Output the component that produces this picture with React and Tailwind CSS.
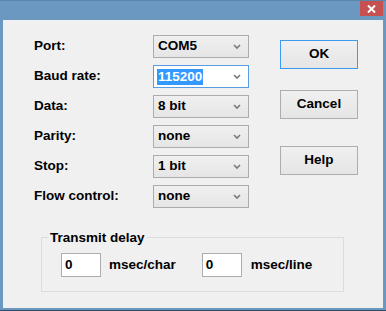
import React from "react";

const font = { fontFamily: '"Liberation Sans", Arial, sans-serif' };

function Chevron() {
  return (
    <svg width="8" height="6" viewBox="0 0 8 6" className="text-[#7a7a7a]">
      <polyline points="1,1 4,4 7,1" fill="none" stroke="currentColor" strokeWidth="1.6" />
    </svg>
  );
}

function Combo({ value, focused }) {
  if (focused) {
    return (
      <div className="flex items-center justify-between w-[96px] h-[23px] border border-[#569de5] bg-white pl-[3px] pr-[7px]">
        <span className="bg-[#3399ff] text-white px-[1px] leading-[16px]">{value}</span>
        <Chevron />
      </div>
    );
  }
  return (
    <div className="flex items-center justify-between w-[96px] h-[23px] border border-[#acacac] bg-gradient-to-b from-[#f0f0f0] to-[#e5e5e5] pl-[4px] pr-[7px]">
      <span>{value}</span>
      <Chevron />
    </div>
  );
}

function Button({ label, focused }) {
  return (
    <button
      className={
        "w-[78px] h-[29px] border bg-gradient-to-b from-[#f0f0f0] to-[#e5e5e5] text-black font-bold " +
        (focused ? "border-[#3c9bf0]" : "border-[#adadad]")
      }
    >
      {label}
    </button>
  );
}

const rows = [
  { label: "Port:", value: "COM5" },
  { label: "Baud rate:", value: "115200", focused: true },
  { label: "Data:", value: "8 bit" },
  { label: "Parity:", value: "none" },
  { label: "Stop:", value: "1 bit" },
  { label: "Flow control:", value: "none" },
];

export default function App() {
  return (
    <div
      className="w-[386px] h-[311px] flex flex-col bg-[#6a98c0] border-t border-[#5a85ab] border-b border-b-[#2e4c68] text-[13.5px] text-black font-bold"
      style={font}
    >
      {/* Title bar */}
      <div className="h-[19px] flex justify-end pr-[3px]">
        <div className="w-[23px] h-[15px] bg-[#c75050] flex items-center justify-center">
          <svg width="9" height="8" viewBox="0 0 9 8">
            <path d="M1 0.5 L8 7.5 M8 0.5 L1 7.5" stroke="white" strokeWidth="2" />
          </svg>
        </div>
      </div>

      {/* Client area */}
      <div className="flex-1 mx-[3px] mb-[2px] bg-[#f0f0f0] flex flex-col">
        <div className="flex pt-[15px] pl-[31px]">
          <div className="flex flex-col gap-[7px] w-[215px]">
            {rows.map((r) => (
              <div key={r.label} className="flex items-center h-[23px]">
                <span className="w-[119px]">{r.label}</span>
                <Combo value={r.value} focused={r.focused} />
              </div>
            ))}
          </div>
          <div className="flex flex-col ml-[31px] mt-[5px]">
            <Button label="OK" focused />
            <div className="mt-[21px]">
              <Button label="Cancel" />
            </div>
            <div className="mt-[27px]">
              <Button label="Help" />
            </div>
          </div>
        </div>

        <fieldset className="ml-[38px] mt-[22px] w-[303px] h-[62px] border border-[#dcdcdc] pb-[14px]">
          <legend className="ml-[6px] px-[2px] leading-[15px]">Transmit delay</legend>
          <div className="flex items-center pl-[19px] mt-[8px]">
            <div className="w-[40px] h-[24px] border border-[#abadb3] bg-white pl-[3px] flex items-center">0</div>
            <span className="ml-[8px]">msec/char</span>
            <div className="ml-[26px] w-[40px] h-[24px] border border-[#abadb3] bg-white pl-[3px] flex items-center">0</div>
            <span className="ml-[9px]">msec/line</span>
          </div>
        </fieldset>
      </div>
    </div>
  );
}
